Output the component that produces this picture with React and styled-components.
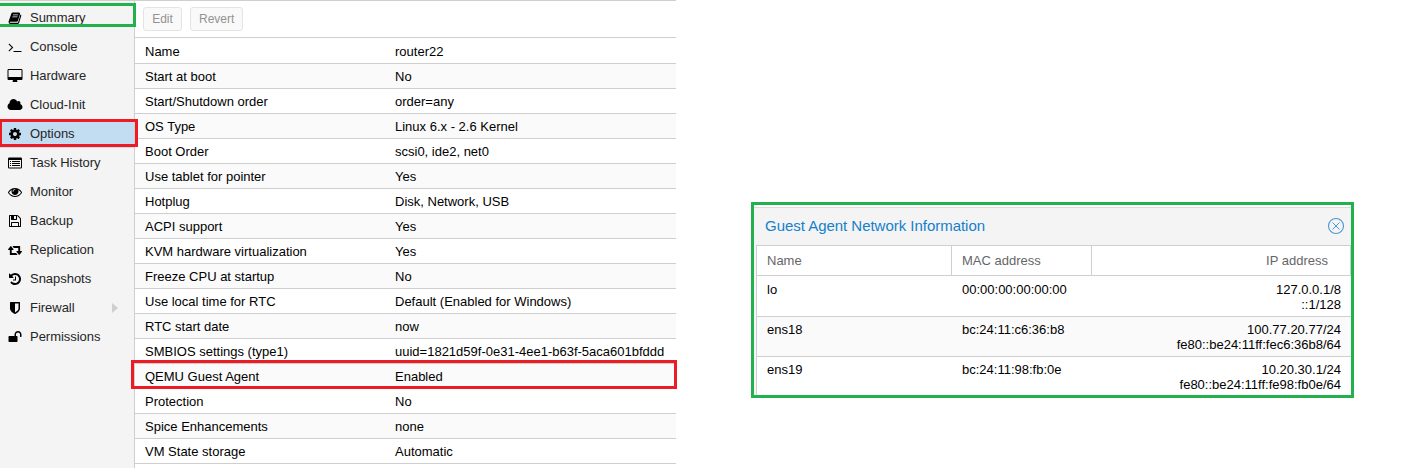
import React from "react";
import styled, { createGlobalStyle } from "styled-components";

const GlobalStyle = createGlobalStyle`
  * { box-sizing: border-box; }
  body {
    margin: 0;
    background: #fff;
    font: 13px/15px "Liberation Sans", Arial, sans-serif;
    color: #000;
    overflow: hidden;
  }
`;

const Page = styled.div`
  display: flex;
  align-items: flex-start;
  width: 1406px;
  height: 468px;
  overflow: hidden;
`;

const Manager = styled.section`
  display: flex;
  width: 676px;
  height: 468px;
  border-top: 1px solid #cfcfcf;
`;

const Sidebar = styled.nav`
  width: 135px;
  padding-top: 2px;
  background: #f4f4f4;
  border-right: 1px solid #cfcfcf;
`;

const NavItem = styled.div`
  position: relative;
  display: flex;
  align-items: center;
  height: 29px;
  padding-left: 5px;
  color: #262626;
  background: ${(p) => (p.$active ? "#c2ddf2" : "transparent")};
`;

const IconSlot = styled.span`
  display: flex;
  justify-content: center;
  flex: none;
  width: 20px;
  margin-right: 5px;
  color: #000;
  svg { display: block; }
`;

const NavLabel = styled.span`
  letter-spacing: -0.03px;
`;

const Expander = styled.span`
  margin-left: auto;
  margin-right: 16px;
  border-left: 6px solid #cfcfcf;
  border-top: 5px solid transparent;
  border-bottom: 5px solid transparent;
`;

const Marker = styled.div`
  position: absolute;
  z-index: 2;
  top: ${(p) => p.$top}px;
  left: ${(p) => p.$left}px;
  width: ${(p) => p.$width}px;
  height: ${(p) => p.$height}px;
  border: 3px solid ${(p) => p.$color};
  pointer-events: none;
`;

const Content = styled.main`
  flex: 1;
`;

const Toolbar = styled.div`
  display: flex;
  gap: 8px;
  height: 37px;
  padding: 6px 8px;
  border-bottom: 1px solid #cfcfcf;
`;

const ToolButton = styled.button`
  height: 24px;
  padding: 0 8px;
  width: ${(p) => p.$width}px;
  border: 1px solid #e4e4e4;
  border-radius: 3px;
  background: #f9f9f9;
  color: #929292;
  font: 12px/14px "Liberation Sans", Arial, sans-serif;
`;

const OptionRow = styled.div`
  position: relative;
  display: flex;
  align-items: center;
  height: 25px;
  padding-top: 1px;
  border-bottom: 1px solid #cfcfcf;
  background: #fff;
  &:nth-child(even) { background: #fafafa; }
  &:first-child { height: 26px; padding-top: 2px; }
`;

const OptionName = styled.div`
  width: 250px;
  padding-left: 10px;
`;

const OptionValue = styled.div`
  flex: 1;
  padding-left: 10px;
  white-space: nowrap;
`;

const AgentWindow = styled.section`
  width: 603px;
  height: 196px;
  margin: 202px 0 0 75px;
  padding-top: 2px;
  border: 3px solid #22b14c;
  overflow: hidden;
`;

const WindowHeader = styled.header`
  display: flex;
  align-items: center;
  justify-content: space-between;
  height: 38px;
  padding: 0 6px 2px 11px;
  border-top: 1px solid #dcdcdc;
  background: #f4f4f4;
  color: #157fcc;
  font-size: 15px;
  letter-spacing: -0.03px;
`;

const WindowBody = styled.div`
  padding: 0 0 0 2px;
  background: #f5f5f5;
`;

const Table = styled.div`
  border-top: 1px solid #cfcfcf;
  border-left: 1px solid #cfcfcf;
  background: #fff;
`;

const TableRow = styled.div`
  display: grid;
  grid-template-columns: 195px 140px 1fr;
  height: ${(p) => p.$height}px;
  border-bottom: 1px solid #cfcfcf;
  background: ${(p) => (p.$alt ? "#fafafa" : "#fff")};
`;

const HeadCell = styled.div`
  padding: 7px 10px;
  color: #666;
  border-right: 1px solid #cfcfcf;
  text-align: ${(p) => (p.$right ? "right" : "left")};
  &:last-child { padding-right: 22px; }
`;

const Cell = styled.div`
  padding: ${(p) => p.$top}px 10px 0;
  text-align: ${(p) => (p.$right ? "right" : "left")};
  white-space: nowrap;
`;

const shapes = {
  book: [1792, "M600 192H1400Q1600 192 1540 390L1290 1220Q1240 1380 1100 1380H290Q210 1380 215 1435Q225 1500 340 1500H1210Q1280 1500 1300 1430L1590 440Q1740 480 1700 620L1430 1500Q1380 1664 1210 1664H310Q60 1664 70 1400Q75 1320 110 1260L420 340Q470 192 600 192ZM660 440L630 540H1270L1300 440ZM580 696L550 796H1190L1220 696Z"],
  terminal: [1792, "M649 983l-466 466q-10 10-23 10t-23-10l-50-50q-10-10-10-23t10-23l393-393-393-393q-10-10-10-23t10-23l50-50q10-10 23-10t23 10l466 466q10 10 10 23t-10 23zm1079 457v64q0 14-9 23t-23 9h-960q-14 0-23-9t-9-23v-64q0-14 9-23t23-9h960q14 0 23 9t9 23z"],
  desktop: [2048, "M1856 992v-832q0-13-9.5-22.5t-22.5-9.5h-1600q-13 0-22.5 9.5t-9.5 22.5v832q0 13 9.5 22.5t22.5 9.5h1600q13 0 22.5-9.5t9.5-22.5zm128-832v1088q0 66-47 113t-113 47h-544q0 37 16 77.5t32 71 16 43.5q0 26-19 45t-45 19h-512q-26 0-45-19t-19-45q0-14 16-44t32-70 16-78h-544q-66 0-113-47t-47-113v-1088q0-66 47-113t113-47h1600q66 0 113 47t47 113z"],
  cloud: [2048, "M1984 1152q0 159-112.5 271.5t-271.5 112.5h-1088q-185 0-316.5-131.5t-131.5-316.5q0-132 71-241.5t187-163.5q-2-28-2-43 0-212 150-362t362-150q158 0 286.5 88t187.5 230q70-62 166-62 106 0 181 75t75 181q0 75-41 138 129 30 213 134.5t84 239.5z"],
  gear: [1792, "M1152 896q0-106-75-181t-181-75-181 75-75 181 75 181 181 75 181-75 75-181zm512-109v222q0 12-8 23t-20 13l-185 28q-19 54-39 91 35 50 107 138 10 12 10 25t-9 23q-27 37-99 108t-94 71q-12 0-26-9l-138-108q-44 23-91 38-16 136-29 186-7 28-36 28h-222q-14 0-24.5-8.5t-11.5-21.5l-28-184q-49-16-90-37l-141 107q-10 9-25 9-14 0-25-11-126-114-165-168-7-10-7-23 0-12 8-23 15-21 51-66.5t54-70.5q-27-50-41-99l-183-27q-13-2-21-12.5t-8-23.5v-222q0-12 8-23t19-13l186-28q14-46 39-92-40-57-107-138-10-12-10-24 0-10 9-23 26-36 98.5-107.5t94.5-71.5q13 0 26 10l138 107q44-23 91-38 16-136 29-186 7-28 36-28h222q14 0 24.5 8.5t11.5 21.5l28 184q49 16 90 37l142-107q9-9 24-9 13 0 25 10 129 119 165 170 7 8 7 22 0 12-8 23-15 21-51 66.5t-54 70.5q26 50 41 98l183 28q13 2 21 12.5t8 23.5z"],
  list: [1792, "M160 192H1632Q1792 192 1792 352V1440Q1792 1600 1632 1600H160Q0 1600 0 1440V352Q0 192 160 192ZM128 512V1440Q128 1472 160 1472H1632Q1664 1472 1664 1440V512ZM256 640H384V768H256ZM512 640H1536V768H512ZM256 896H384V1024H256ZM512 896H1536V1024H512ZM256 1152H384V1280H256ZM512 1152H1536V1280H512Z"],
  eye: [1792, "M1664 960q-152-236-381-353 61 104 61 225 0 185-131.5 316.5t-316.5 131.5-316.5-131.5-131.5-316.5q0-121 61-225-229 117-381 353 133 205 333.5 326.5t434.5 121.5 434.5-121.5 333.5-326.5zm-720-384q0-20-14-34t-34-14q-125 0-214.5 89.5t-89.5 214.5q0 20 14 34t34 14 34-14 14-34q0-86 61-147t147-61q20 0 34-14t14-34zm848 384q0 34-20 69-140 230-376.5 368.5t-499.5 138.5-499.5-139-376.5-368q-20-35-20-69t20-69q140-229 376.5-368t499.5-139 499.5 139 376.5 368q20 35 20 69z"],
  floppy: [1792, "M512 1536h768v-384h-768v384zm896 0h128v-896q0-14-10-38.5t-20-34.5l-281-281q-10-10-34-20t-39-10v416q0 40-28 68t-68 28h-576q-40 0-68-28t-28-68v-416h-128v1280h128v-416q0-40 28-68t68-28h832q40 0 68 28t28 68v416zm-384-928v-320q0-13-9.5-22.5t-22.5-9.5h-192q-13 0-22.5 9.5t-9.5 22.5v320q0 13 9.5 22.5t22.5 9.5h192q13 0 22.5-9.5t9.5-22.5zm640 32v928q0 40-28 68t-68 28h-1344q-40 0-68-28t-28-68v-1344q0-40 28-68t68-28h928q40 0 88 20t76 48l280 280q28 28 48 76t20 88z"],
  retweet: [1920, "M1280 1504q0 13-9.5 22.5t-22.5 9.5h-960q-8 0-13.5-2t-9-7-5.5-8-3-11.5-1-11.5v-600h-192q-26 0-45-19t-19-45q0-24 15-41l320-384q19-22 49-22t49 22l320 384q15 17 15 41 0 26-19 45t-45 19h-192v384h576q16 0 25 11l160 192q7 10 7 21zm640-416q0 24-15 41l-320 384q-20 23-49 23t-49-23l-320-384q-15-17-15-41 0-26 19-45t45-19h192v-384h-576q-16 0-25-12l-160-192q-7-9-7-20 0-13 9.5-22.5t22.5-9.5h960q8 0 13.5 2t9 7 5.5 8 3 11.5 1 11.5v600h192q26 0 45 19t19 45z"],
  history: [1792, "M1664 896q0 156-61 298t-164 245-245 164-298 61q-172 0-327-72.5t-264-204.5q-7-10-6.5-22.5t8.5-20.5l137-138q10-9 25-9 16 2 23 12 73 95 179 147t225 52q104 0 198.5-40.5t163.5-109.5 109.5-163.5 40.5-198.5-40.5-198.5-109.5-163.5-163.5-109.5-198.5-40.5q-98 0-188 35.5t-160 101.5l137 138q31 30 14 69-17 40-59 40h-448q-26 0-45-19t-19-45v-448q0-42 40-59 39-17 69 14l130 129q107-101 244.5-156.5t284.5-55.5q156 0 298 61t245 164 164 245 61 298zm-640-288v448q0 14-9 23t-23 9h-320q-14 0-23-9t-9-23v-64q0-14 9-23t23-9h224v-352q0-14 9-23t23-9h64q14 0 23 9t9 23z"],
  shield: [1792, "M1344 960v-640h-448v1137q119-63 213-137 235-184 235-360zm192-768v768q0 86-33.5 170.5t-83 150-118 127.5-126.5 103-121 77.5-89.5 49.5-42.5 20q-12 6-26 6t-26-6q-16-7-42.5-20t-89.5-49.5-121-77.5-126.5-103-118-127.5-83-150-33.5-170.5v-768q0-26 19-45t45-19h1152q26 0 45 19t19 45z"],
  unlock: [1792, "M1728 576v256q0 26-19 45t-45 19h-64q-26 0-45-19t-19-45v-256q0-106-75-181t-181-75-181 75-75 181v192h96q40 0 68 28t28 68v576q0 40-28 68t-68 28h-960q-40 0-68-28t-28-68v-576q0-40 28-68t68-28h672v-192q0-185 131.5-316.5t316.5-131.5 316.5 131.5 131.5 316.5z"],
};

function Icon({ name }) {
  const [width, path] = shapes[name];
  const evenOdd = name === "list" || name === "book";
  return (
    <svg
      width={name === "retweet" ? 14 : width / 128}
      height="14"
      viewBox={`0 0 ${width} 1792`}
      preserveAspectRatio="none"
      fill="currentColor"
    >
      <path fillRule={evenOdd ? "evenodd" : "nonzero"} d={path} />
    </svg>
  );
}

const nav = [
  { icon: "book", label: "Summary", marker: { $color: "#22b14c", $top: 0, $left: -3, $width: 139, $height: 24 } },
  { icon: "terminal", label: "Console" },
  { icon: "desktop", label: "Hardware" },
  { icon: "cloud", label: "Cloud-Init" },
  { icon: "gear", label: "Options", active: true, marker: { $color: "#ed1c24", $top: 0, $left: -1, $width: 139, $height: 28 } },
  { icon: "list", label: "Task History" },
  { icon: "eye", label: "Monitor" },
  { icon: "floppy", label: "Backup" },
  { icon: "retweet", label: "Replication" },
  { icon: "history", label: "Snapshots" },
  { icon: "shield", label: "Firewall", expandable: true },
  { icon: "unlock", label: "Permissions" },
];

const options = [
  ["Name", "router22"],
  ["Start at boot", "No"],
  ["Start/Shutdown order", "order=any"],
  ["OS Type", "Linux 6.x - 2.6 Kernel"],
  ["Boot Order", "scsi0, ide2, net0"],
  ["Use tablet for pointer", "Yes"],
  ["Hotplug", "Disk, Network, USB"],
  ["ACPI support", "Yes"],
  ["KVM hardware virtualization", "Yes"],
  ["Freeze CPU at startup", "No"],
  ["Use local time for RTC", "Default (Enabled for Windows)"],
  ["RTC start date", "now"],
  ["SMBIOS settings (type1)", "uuid=1821d59f-0e31-4ee1-b63f-5aca601bfddd"],
  ["QEMU Guest Agent", "Enabled"],
  ["Protection", "No"],
  ["Spice Enhancements", "none"],
  ["VM State storage", "Automatic"],
];

const interfaces = [
  ["lo", "00:00:00:00:00:00", ["127.0.0.1/8", "::1/128"]],
  ["ens18", "bc:24:11:c6:36:b8", ["100.77.20.77/24", "fe80::be24:11ff:fec6:36b8/64"]],
  ["ens19", "bc:24:11:98:fb:0e", ["10.20.30.1/24", "fe80::be24:11ff:fe98:fb0e/64"]],
];

export default function App() {
  return (
    <Page>
      <GlobalStyle />
      <Manager>
        <Sidebar>
          {nav.map((item) => (
            <NavItem key={item.label} $active={item.active}>
              <IconSlot><Icon name={item.icon} /></IconSlot>
              <NavLabel>{item.label}</NavLabel>
              {item.expandable && <Expander />}
              {item.marker && <Marker {...item.marker} />}
            </NavItem>
          ))}
        </Sidebar>
        <Content>
          <Toolbar>
            <ToolButton $width={39}>Edit</ToolButton>
            <ToolButton $width={53}>Revert</ToolButton>
          </Toolbar>
          <div>
            {options.map(([name, value]) => (
              <OptionRow key={name}>
                <OptionName>{name}</OptionName>
                <OptionValue>{value}</OptionValue>
                {name === "QEMU Guest Agent" && (
                  <Marker $color="#ed1c24" $top={-4} $left={-4} $width={546} $height={29} />
                )}
              </OptionRow>
            ))}
          </div>
        </Content>
      </Manager>
      <AgentWindow>
        <WindowHeader>
          <span>Guest Agent Network Information</span>
          <svg width="18" height="18" viewBox="0 0 18 18" fill="none" stroke="#4a97d2">
            <circle cx="9" cy="9" r="7.5" strokeWidth="1.1" />
            <path d="M5.5 5.5l7 7M12.5 5.5l-7 7" strokeWidth="1" />
          </svg>
        </WindowHeader>
        <WindowBody>
          <Table>
            <TableRow $height={30}>
              <HeadCell>Name</HeadCell>
              <HeadCell>MAC address</HeadCell>
              <HeadCell $right>IP address</HeadCell>
            </TableRow>
            {interfaces.map(([name, mac, ips], i) => (
              <TableRow key={name} $height={i === 0 ? 41 : 40} $alt={i === 1}>
                <Cell $top={i === 0 ? 6 : 5}>{name}</Cell>
                <Cell $top={i === 0 ? 6 : 5}>{mac}</Cell>
                <Cell $top={i === 0 ? 6 : 5} $right>
                  {ips.map((ip) => <div key={ip}>{ip}</div>)}
                </Cell>
              </TableRow>
            ))}
          </Table>
        </WindowBody>
      </AgentWindow>
    </Page>
  );
}
